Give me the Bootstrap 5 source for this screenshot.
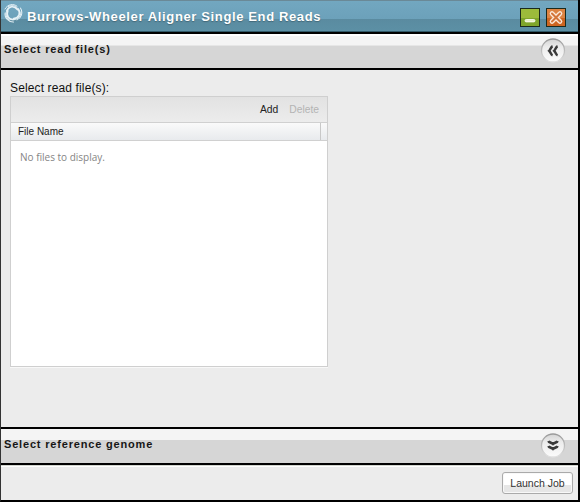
<!DOCTYPE html>
<html lang="en">
<head>
<meta charset="utf-8">
<title>Burrows-Wheeler Aligner Single End Reads</title>
<link href="https://cdn.jsdelivr.net/npm/bootstrap@5.3.0/dist/css/bootstrap.min.css" rel="stylesheet">
<style>
body{font-family:"Liberation Sans",Arial,sans-serif;font-size:11px;line-height:14px;color:#222;background:#ececec;overflow:hidden}
.window{width:580px;height:502px;border-left:1px solid #333;border-right:2px solid #000;border-bottom:2px solid #000;background:#ececec}
.titlebar{height:34px;padding:0 12px 2px 2px;border-bottom:2px solid #000;background:linear-gradient(#6a8997 0 1px,#72a7c0 1px,#6ca1ba 19px,#5a8ba0 19px,#5c90a5 31px,#315968 31px)}
.title{font-size:13px;font-weight:700;letter-spacing:.63px;color:#fff;text-shadow:0 1px 1px #426878;white-space:nowrap;padding-top:3px}
.tools{gap:6px}
.tool{width:20px;height:19px;margin-top:4px;border:1px solid #1b2a1d}
.tool-min{background:linear-gradient(#9cbb3b 0 9px,#7fa52a 9px)}
.tool-close{background:linear-gradient(#dc8342 0 9px,#cd6520 9px)}
.section-bar{flex:none;padding:0 12px 0 3px;border-bottom:2px solid #000;font-size:11px;font-weight:700;letter-spacing:.82px;white-space:nowrap;color:#161616}
.bar-top{height:36px;background:linear-gradient(#fff 0 2px,#f4f4f4 2px 11px,#e6e6e6 11px 12px,#d6d6d6 12px)}
.bar-bottom{height:38px;border-top:2px solid #000;background:linear-gradient(#f4f4f4 0 11px,#d6d6d6 11px)}
.section-body{padding:11px 9px 0;min-height:0}
.field-label{font-size:12px;line-height:15px;letter-spacing:.13px;height:15px;color:#111}
.files{width:318px;height:271px;border:1px solid #cfcfcf;background:#fff;box-shadow:0 1px #f8f8f8}
.files-tools{height:26px;padding:0 8px 0 0;background:linear-gradient(#e2e2e2,#ececec);border-bottom:1px solid #d0d0d0;gap:11px}
.files-head{height:18px;padding-left:7px;font-size:10px;background:linear-gradient(#fafafa,#e8eaed);border-bottom:1px solid #d0d0d0}
.col-end{width:7px;border-left:1px solid #c8c8c8}
.link-text{font-size:10.3px}
.off{color:#b4b4b4}
.empty{padding:9px 9px;font-family:"Open Sans","Noto Sans",sans-serif;font-size:10px;color:#858585}
.footer-bar{height:35px;flex:none;padding:7px 5px 0 0;box-shadow:inset 0 1px #d3d6cf,inset 0 2px #fff}
.launch{width:71px;height:22px;padding:0;font-size:10.5px;line-height:20px;border:1px solid #aaa;border-radius:3px;color:#333;background:linear-gradient(#fff 0 12px,#e6e6e6 12px);box-shadow:inset 0 0 0 1px #f8f8f8;white-space:nowrap}
</style>
<script src="https://cdn.jsdelivr.net/npm/bootstrap@5.3.0/dist/js/bootstrap.bundle.min.js"></script>
</head>
<body>
<svg width="0" height="0" class="position-absolute">
<defs>
<linearGradient id="knob" x1="0" y1="0" x2="0" y2="1"><stop offset="0" stop-color="#d4d4d4"/><stop offset=".35" stop-color="#ececec"/><stop offset="1" stop-color="#fbfbfb"/></linearGradient>
<linearGradient id="rim" x1="0" y1="0" x2="0" y2="1"><stop offset="0" stop-color="#999"/><stop offset="1" stop-color="#e0e0e0"/></linearGradient>
</defs>
</svg>
<div class="window d-flex flex-column">
  <header class="titlebar d-flex align-items-center flex-shrink-0">
    <svg width="20" height="20" viewBox="0 0 20 20" fill="none" stroke="#e6f1f6" stroke-linecap="round" class="flex-shrink-0 mb-1">
      <g id="swirl"><path d="M2 6C4.5 1.2 10.5.2 14 3.2" stroke-width="1"/><path d="M4 7.4C6 3.2 11 2.2 14.6 6.6" stroke-width="1.7"/><path d="M5.2 3.6C10 1 15.6 3.4 16.4 9.4" stroke-width=".9"/></g>
      <use href="#swirl" transform="rotate(120 10 10)"/><use href="#swirl" transform="rotate(240 10 10)"/>
    </svg>
    <span class="title ms-1">Burrows-Wheeler Aligner Single End Reads</span>
    <div class="tools d-flex ms-auto">
      <svg class="tool tool-min" viewBox="0 0 18 17"><rect x="4" y="10.5" width="10" height="2.4" rx="1.2" fill="#e9f0c4" stroke="#fff" stroke-width=".8"/></svg>
      <svg class="tool tool-close" viewBox="0 0 18 17"><path d="M5 4.5l8 8M13 4.5l-8 8" stroke="#fbe9da" stroke-width="4.6" stroke-linecap="round"/><path d="M5 4.5l8 8M13 4.5l-8 8" stroke="#d3753a" stroke-width="2" stroke-linecap="round"/></svg>
    </div>
  </header>
  <div class="section-bar bar-top d-flex align-items-center">
    <span class="pb-1">Select read file(s)</span>
    <svg class="ms-auto" width="26" height="26" viewBox="0 0 26 26"><circle cx="13" cy="12.5" r="11.5" fill="url(#knob)" stroke="url(#rim)" stroke-width="1.3"/><path d="M12.6 8.2C10.9 8.8 10.7 11.4 9.2 12.8c1.5 1.4 1.7 4 3.4 4.6M17.6 8.2c-1.7.6-1.9 3.2-3.4 4.6 1.5 1.4 1.7 4 3.4 4.6" fill="none" stroke="#3a3a3a" stroke-width="2.5"/></svg>
  </div>
  <main class="section-body flex-grow-1">
    <div class="field-label">Select read file(s):</div>
    <div class="files">
      <div class="files-tools d-flex justify-content-end align-items-center"><span class="link-text">Add</span><span class="link-text off">Delete</span></div>
      <div class="files-head d-flex"><span class="flex-grow-1 pt-1 lh-1">File Name</span><span class="col-end"></span></div>
      <div class="empty">No files to display.</div>
    </div>
  </main>
  <div class="section-bar bar-bottom d-flex align-items-center">
    <span class="pb-1">Select reference genome</span>
    <svg class="ms-auto" width="26" height="26" viewBox="0 0 26 26"><circle cx="13" cy="12.5" r="11.5" fill="url(#knob)" stroke="url(#rim)" stroke-width="1.3"/><path d="M8.5 8c.6 1.7 3 1.5 4.5 2.8 1.5-1.3 3.9-1.1 4.5-2.8M8.5 13c.6 1.7 3 1.5 4.5 2.8 1.5-1.3 3.9-1.1 4.5-2.8" fill="none" stroke="#3a3a3a" stroke-width="2.8"/></svg>
  </div>
  <footer class="footer-bar d-flex justify-content-end"><button class="launch" type="button">Launch Job</button></footer>
</div>
</body>
</html>
